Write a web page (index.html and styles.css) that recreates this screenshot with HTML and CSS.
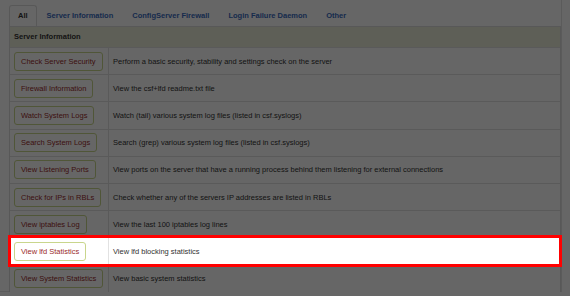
FILE: index.html
```html
<!DOCTYPE html>
<html lang="en">

<head>
    <meta charset="UTF-8">
    <title>csf</title>
    <link rel="stylesheet" href="styles.css">
</head>

<body>
    <div class="page">
        <ul class="tabs">
            <li class="tab active">All</li>
            <li class="tab">Server Information</li>
            <li class="tab">ConfigServer Firewall</li>
            <li class="tab">Login Failure Daemon</li>
            <li class="tab">Other</li>
        </ul>
        <div class="panel">
            <div class="panel-head">Server Information</div>
            <div class="row">
                <div class="cell"><span class="btn">Check Server Security</span></div>
                <div class="cell desc">Perform a basic security, stability and settings check on the server</div>
            </div>
            <div class="row">
                <div class="cell"><span class="btn">Firewall Information</span></div>
                <div class="cell desc">View the csf+lfd readme.txt file</div>
            </div>
            <div class="row">
                <div class="cell"><span class="btn">Watch System Logs</span></div>
                <div class="cell desc">Watch (tail) various system log files (listed in csf.syslogs)</div>
            </div>
            <div class="row">
                <div class="cell"><span class="btn">Search System Logs</span></div>
                <div class="cell desc">Search (grep) various system log files (listed in csf.syslogs)</div>
            </div>
            <div class="row">
                <div class="cell"><span class="btn">View Listening Ports</span></div>
                <div class="cell desc">View ports on the server that have a running process behind them listening for external connections</div>
            </div>
            <div class="row">
                <div class="cell"><span class="btn">Check for IPs in RBLs</span></div>
                <div class="cell desc">Check whether any of the servers IP addresses are listed in RBLs</div>
            </div>
            <div class="row">
                <div class="cell"><span class="btn">View iptables Log</span></div>
                <div class="cell desc">View the last 100 iptables log lines</div>
            </div>
            <div class="row spot">
                <div class="cell"><span class="btn">View lfd Statistics</span></div>
                <div class="cell desc">View lfd blocking statistics</div>
            </div>
            <div class="row">
                <div class="cell"><span class="btn">View System Statistics</span></div>
                <div class="cell desc">View basic system statistics</div>
            </div>
        </div>
    </div>
    <!-- dims everything except the highlighted row -->
    <div class="dim"></div>
</body>

</html>
```

FILE: styles.css
```css
body,
html {
    margin: 0;
    background: #ffffff;
    font-family: "Liberation Sans", Helvetica, Arial, sans-serif;
    font-size: 7.5px;
    color: #333;
}

.page {
    width: 552px;
    height: 286px;
    padding: 5px 0 0 9px;
    border-right: 1px solid #e4e4e4;
    border-bottom: 1px solid #e4e4e4;
}

.tabs {
    display: flex;
    margin: 0;
    padding: 0;
    list-style: none;
}

.tab {
    height: 20px;
    line-height: 20px;
    padding: 0 8px;
    margin-right: 1px;
    border: 1px solid transparent;
    border-bottom: none;
    font-weight: bold;
    color: #3a6cc0;
}

.tab.active {
    color: #333;
    border-color: #dddddd;
    border-radius: 3px 3px 0 0;
}

.panel {
    border: 1px solid #dddddd;
}

.panel-head {
    height: 20px;
    line-height: 20px;
    padding-left: 4px;
    background: #ebedda;
    font-weight: bold;
}

.row {
    display: grid;
    grid-template-columns: 98px 1fr;
    height: 27.2px;
    border-top: 1px solid #e2e2e2;
    box-sizing: border-box;
    background: #ffffff;
}

.cell {
    display: flex;
    align-items: center;
    padding-left: 4px;
}

.desc {
    border-left: 1px solid #e2e2e2;
    white-space: nowrap;
}

.btn {
    display: inline-block;
    height: 17px;
    line-height: 17px;
    padding: 0 6px;
    border: 1px solid #c9d68c;
    border-radius: 3px;
    background: #fff;
    color: #9a2b2b;
    white-space: nowrap;
}

.dim {
    position: fixed;
    inset: 0;
    background: rgba(0, 0, 0, 0.6);
    z-index: 1;
}

.row.spot {
    position: relative;
    z-index: 2;
    outline: 3px solid #ff0000;
    outline-offset: -1px;
}
```
